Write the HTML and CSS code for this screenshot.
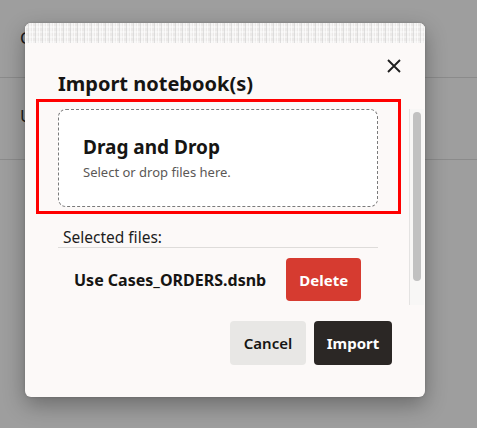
FILE: index.html
```html
<!DOCTYPE html>
<html lang="en">
<head>
<meta charset="utf-8">
<title>Import notebook(s)</title>
<link rel="stylesheet" href="styles.css">
</head>
<body>
<div class="page">
  <div class="bg-row bg-row-first"><span class="bg-text">Create</span></div>
  <div class="bg-row"><span class="bg-text">Use Cases</span></div>
</div>

<div class="dialog" role="dialog" aria-label="Import notebook(s)">
  <div class="dialog-band"></div>
  <button class="close" aria-label="Close">
    <svg width="14" height="14" viewBox="0 0 14 14"><path d="M1 1L13 13M13 1L1 13" stroke="#1f1f1f" stroke-width="1.9" fill="none"/></svg>
  </button>
  <h1 class="title">Import notebook(s)</h1>
  <div class="scroll-area">
    <div class="scroller">
      <div class="drop">
        <div class="drop-title">Drag and Drop</div>
        <div class="drop-sub">Select or drop files here.</div>
      </div>
      <div class="selected">Selected files:</div>
      <div class="file-row">
        <span class="file-name">Use Cases_ORDERS.dsnb</span>
        <button class="btn btn-delete">Delete</button>
      </div>
    </div>
    <div class="scrollbar"><div class="thumb"></div></div>
  </div>
  <div class="footer">
    <button class="btn btn-cancel">Cancel</button>
    <button class="btn btn-import">Import</button>
  </div>
  <div class="highlight"></div>
</div>
</body>
</html>
```
FILE: styles.css
```css
* { box-sizing: border-box; }
html, body { margin: 0; padding: 0; }
body {
  width: 477px;
  height: 428px;
  overflow: hidden;
  background: #9e9e9e;
  font-family: "Noto Sans", "Open Sans", sans-serif;
  color: #1d1d1d;
  position: relative;
}
.bg-row {
  height: 82px;
  border-bottom: 1px solid #8b8b8b;
  padding-left: 20px;
  padding-top: 26px;
  display: flex;
  align-items: flex-start;
}
.bg-row-first { height: 78px; }
.bg-text { font-size: 17px; color: #1a1a1a; }

.dialog {
  position: absolute;
  left: 25px;
  top: 23px;
  width: 400px;
  height: 374px;
  background: #fcf9f8;
  border-radius: 6px;
  box-shadow: 0 8px 22px rgba(0,0,0,0.32), 0 0 3px rgba(0,0,0,0.15);
  overflow: hidden;
  display: flex;
  flex-direction: column;
}
.dialog-band {
  height: 20px;
  flex: none;
  background:
    repeating-linear-gradient(90deg, rgba(255,255,255,0.7) 0 1px, rgba(0,0,0,0) 1px 3px, rgba(210,210,210,0.6) 3px 4px, rgba(255,255,255,0.5) 4px 6px, rgba(0,0,0,0) 6px 7px),
    repeating-linear-gradient(0deg, rgba(255,255,255,0.4) 0 2px, rgba(0,0,0,0) 2px 5px),
    #ebe9e8;
}
.close {
  position: absolute;
  right: 24px;
  top: 36px;
  width: 14px;
  height: 14px;
  padding: 0;
  border: 0;
  background: none;
  display: block;
}
.close svg { display: block; }
.title {
  margin: 27px 0 0 33px;
  font-size: 20px;
  line-height: 28px;
  font-weight: 700;
  color: #161513;
}
.scroll-area {
  margin-top: 11px;
  height: 196px;
  flex: none;
  display: flex;
}
.scroller {
  flex: 1;
  overflow: hidden;
  padding: 0 31px 0 33px;
}
.scrollbar {
  width: 15px;
  margin-right: 1px;
  flex: none;
  background: #f8f7f6;
  border-left: 1px solid #e4e3e2;
  padding: 3px 3px 0 3px;
}
.thumb {
  height: 169px;
  width: 8px;
  border-radius: 5px;
  background: #c1c1c1;
}
.drop {
  height: 98px;
  background: #ffffff;
  border: 1px dashed #7a7a7a;
  border-radius: 8px;
  padding: 25px 24px 0 24px;
}
.drop-title {
  font-size: 19px;
  line-height: 25px;
  font-weight: 700;
  color: #161513;
}
.drop-sub {
  margin-top: 3px;
  font-size: 13px;
  line-height: 18px;
  color: #5b5856;
}
.selected {
  margin-top: 20px;
  padding: 0 5px 0;
  font-size: 15.5px;
  line-height: 20px;
  color: #1d1d1d;
  border-bottom: 1px solid #dedcda;
}
.file-row {
  margin-top: 10px;
  padding-left: 16px;
  display: flex;
  align-items: center;
  gap: 20px;
}
.file-name {
  font-size: 16px;
  font-weight: 700;
  color: #161513;
}
.btn {
  height: 44px;
  border: 0;
  border-radius: 4px;
  font-family: "Noto Sans", "Open Sans", sans-serif;
  font-size: 15px;
  font-weight: 700;
  padding: 0;
}
.btn-delete {
  width: 75px;
  height: 43px;
  background: #d63b30;
  color: #fff;
}
.footer {
  margin-top: 16px;
  padding-right: 33px;
  display: flex;
  justify-content: flex-end;
  gap: 8px;
}
.btn-cancel {
  width: 76px;
  background: #e8e7e5;
  color: #161513;
  font-weight: 600;
}
.btn-import {
  width: 78px;
  background: #2b2725;
  color: #fff;
}
.highlight {
  position: absolute;
  left: 11px;
  top: 76px;
  width: 365px;
  height: 115px;
  border: 3px solid #ff0000;
  pointer-events: none;
}
```
